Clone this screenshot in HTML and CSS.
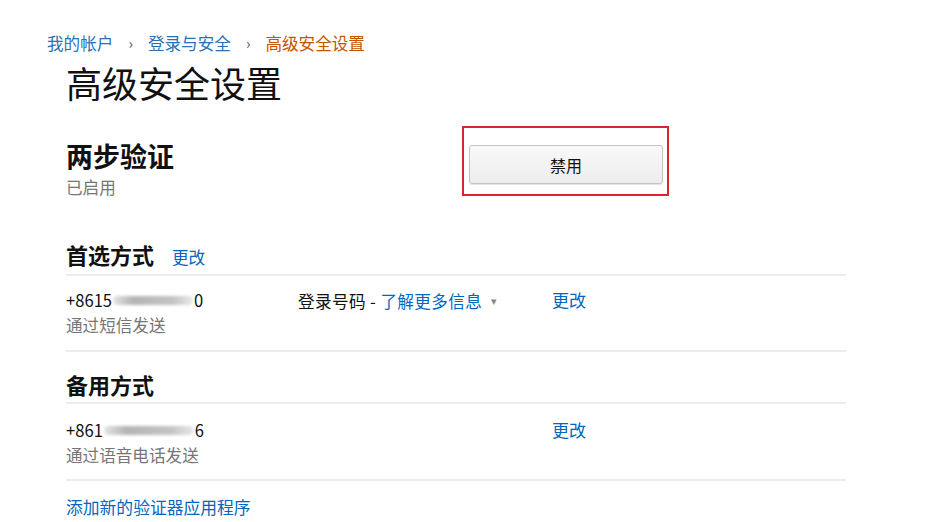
FILE: index.html
```html
<!DOCTYPE html>
<html lang="zh-CN">
<head>
    <meta charset="UTF-8">
    <title>高级安全设置</title>
    <link rel="stylesheet" href="styles.css">
</head>
<body>
    <section id="wrap">
        <nav class="crumb">
            <a href="javascript:;">我的帐户</a>
            <span class="sep">›</span>
            <a href="javascript:;">登录与安全</a>
            <span class="sep">›</span>
            <span class="cur">高级安全设置</span>
        </nav>
        <h1 class="title">高级安全设置</h1>

        <div class="twoStep">
            <div class="info">
                <h2>两步验证</h2>
                <p class="sub">已启用</p>
            </div>
            <div class="mark">
                <a class="btn" href="javascript:;">禁用</a>
            </div>
        </div>

        <div class="block first">
            <div class="blockHead">
                <h3>首选方式</h3>
                <a href="javascript:;">更改</a>
            </div>
            <div class="row">
                <div class="phone">
                    <p>+8615<span class="blur w1"></span>0</p>
                    <p class="sub">通过短信发送</p>
                </div>
                <div class="note">登录号码 - <a href="javascript:;">了解更多信息</a><span class="caret">▾</span></div>
                <div class="act"><a href="javascript:;">更改</a></div>
            </div>
        </div>

        <div class="block second">
            <div class="blockHead">
                <h3>备用方式</h3>
            </div>
            <div class="row">
                <div class="phone">
                    <p>+861<span class="blur w2"></span>6</p>
                    <p class="sub">通过语音电话发送</p>
                </div>
                <div class="note"></div>
                <div class="act"><a href="javascript:;">更改</a></div>
            </div>
        </div>

        <a class="addApp" href="javascript:;">添加新的验证器应用程序</a>
    </section>
</body>
</html>
```

FILE: styles.css
```css
/*reset*/
html,body,h1,h2,h3,p{margin: 0;padding: 0;}
body{
    background: #fff;
    color: #111;
    font-family: "Noto Sans CJK SC", "Liberation Sans", sans-serif;
}
a{text-decoration: none;color: #0066c0;}

#wrap{
    width: 780px;
    padding: 33px 0 0 66px;
}

/*面包屑*/
.crumb{
    margin-left: -19px;
    font-size: 16.6px;
    line-height: 20px;
    height: 20px;
    display: flex;
    gap: 15px;
}
.crumb a{color: #2c6fb3;}
.crumb .sep{color: #555;font-size: 15px;}
.crumb .cur{color: #c45500;}

.title{
    margin-top: 7px;
    font-size: 36px;
    line-height: 44px;
    font-weight: 400;
    color: #111;
}

/*两步验证*/
.twoStep{
    margin-top: 22px;
    display: flex;
}
.twoStep .info{
    width: 396px;
    padding-top: 13px;
}
.twoStep h2{
    font-size: 27px;
    line-height: 34px;
    font-weight: 700;
}
.sub{
    color: #767676;
    font-size: 16.6px;
    line-height: 22px;
}
.twoStep .sub{
    margin-top: 3px;
}
.twoStep .mark{
    border: 2px solid #d8262c;
    width: 194px;
    height: 39px;
    padding: 17px 4px 10px 5px;
}
.twoStep .btn{
    display: flex;
    align-items: center;
    justify-content: center;
    height: 37px;
    border: 1px solid #c4c4c4;
    border-radius: 3px;
    background: linear-gradient(#f9f9f9, #ececec);
    box-shadow: 0 1px 1px rgba(0,0,0,0.12);
    color: #111;
    font-size: 16px;
}

/*方式*/
.block.first{margin-top: 43px;}
.block.second{margin-top: 19px;}
.blockHead{
    display: flex;
    align-items: baseline;
    gap: 18px;
    padding-bottom: 5px;
    border-bottom: 2px solid #ececec;
}
.blockHead h3{
    font-size: 22px;
    line-height: 26px;
    font-weight: 700;
}
.blockHead a{font-size: 16.6px;}

.row{
    display: grid;
    grid-template-columns: 232px 254px auto;
    padding: 13px 0 14px;
    border-bottom: 2px solid #ececec;
    font-size: 16.6px;
    line-height: 22px;
}
.second .row{padding: 15px 0 13px;}
.row .phone p:first-child{margin-bottom: 3px;}
.row .note{color: #111;letter-spacing: 0.4px;}
.row .caret{color: #888;font-size: 11px;margin-left: 9px;vertical-align: 3px;}
.row .act a{font-size: 17px;}

.blur{
    display: inline-block;
    height: 9px;
    vertical-align: 2px;
    background: linear-gradient(90deg, #e4e4e4, #b4b4b4 25%, #c4c4c4 75%, #e8e8e8);
    border-radius: 5px;
    filter: blur(1.5px);
}
.blur.w1{width: 80px;margin: 0 1px;}
.blur.w2{width: 90px;margin: 0 1px;}

.addApp{
    display: block;
    margin-top: 15px;
    font-size: 16.8px;
    line-height: 22px;
}
```
